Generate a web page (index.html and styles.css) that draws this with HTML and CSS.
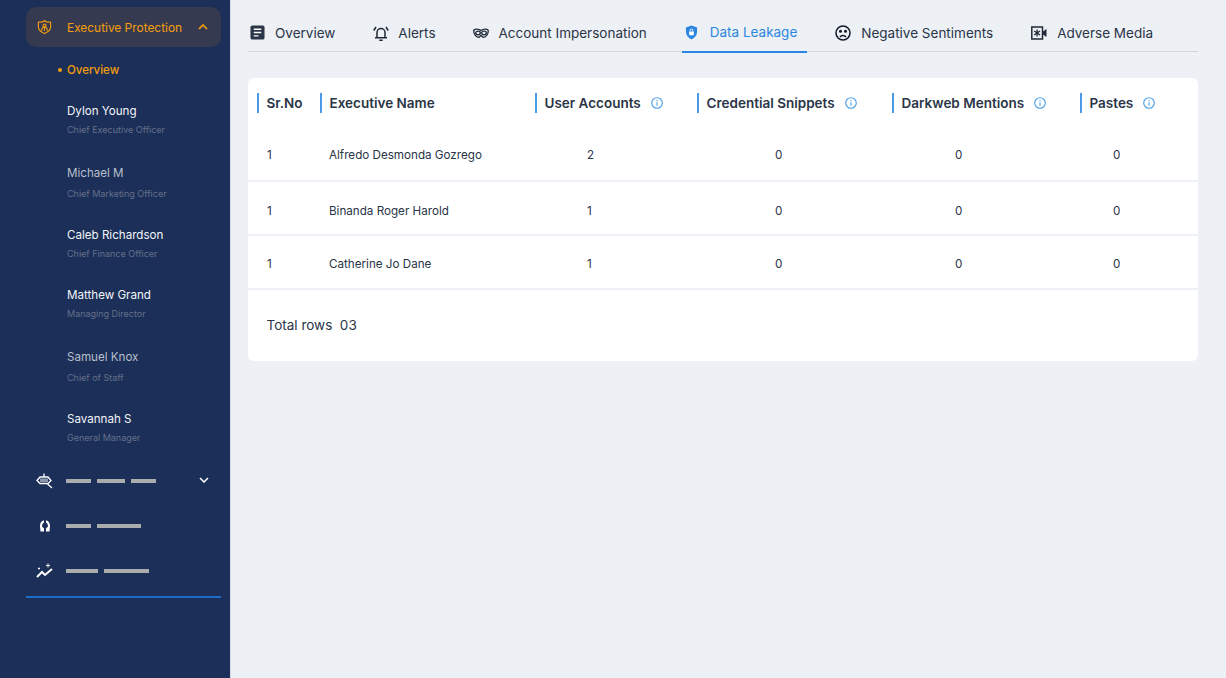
FILE: index.html
```html
<!DOCTYPE html>
<html lang="en">
<head>
<meta charset="utf-8">
<title>Data Leakage</title>
<link rel="stylesheet" href="styles.css">
</head>
<body>
<div class="app">
  <aside class="sidebar">
    <div class="menu-head">
      <svg class="ico-shield" viewBox="0 0 16 16" width="15" height="16" fill="none" stroke="currentColor" stroke-width="1.200"><path d="M8 1l2 1.500 4.500.5v5c0 3-3 5.500-6.500 7C4.500 13.500 1.500 11 1.500 8V3L6 2.500z"/><circle cx="8" cy="6.500" r="1.600"/><path d="M5 12c0-3 1-4 3-4s3 1 3 4M8 8v4"/></svg>
      <span class="menu-title">Executive Protection</span>
      <svg class="chev" viewBox="0 0 10 6" width="10" height="6" fill="none" stroke="currentColor" stroke-width="1.700"><path d="M1 5l4-4 4 4"/></svg>
    </div>
    <div class="sub-active">Overview</div>
    <ul class="people">
      <li><div class="pname">Dylon Young</div><div class="prole">Chief Executive Officer</div></li>
      <li class="dim tall"><div class="pname">Michael M</div><div class="prole">Chief Marketing Officer</div></li>
      <li class="short"><div class="pname">Caleb Richardson</div><div class="prole">Chief Finance Officer</div></li>
      <li><div class="pname">Matthew Grand</div><div class="prole">Managing Director</div></li>
      <li class="dim tall"><div class="pname">Samuel Knox</div><div class="prole">Chief of Staff</div></li>
      <li><div class="pname">Savannah S</div><div class="prole">General Manager</div></li>
    </ul>
    <div class="rows">
      <div class="rrow">
        <svg viewBox="0 0 18 16" width="18" height="16" fill="none" stroke="#fff" stroke-width="1.300"><path d="M8 .5v3M1 7.500l3-3.500h8l3 3.500-3 3H4zM11 10.500l5 4.500"/><path d="M5 5.500v3.500M7 5.500v3.500M9 5.500v3.500M11 5.500v3.500" stroke-width="1"/></svg>
        <span class="bar w25"></span><span class="bar w28"></span><span class="bar w25"></span>
        <svg class="chev-down" viewBox="0 0 10 6" width="10" height="6" fill="none" stroke="#fff" stroke-width="1.500"><path d="M1 1l4 4 4-4"/></svg>
      </div>
      <div class="rrow">
        <svg viewBox="0 0 18 16" width="18" height="16" fill="#fff"><path d="M8 2.500C5.500 2.500 4 5 4 8l.5 5.500H8v-3L6 8.500C6 6.500 6.500 5.500 8 4.500zM10 2.500c2.500 0 4 2.500 4 5.500l-.5 5.500H10v-3l2-2c0-2-.5-3-2-4z"/></svg>
        <span class="bar w25"></span><span class="bar w44"></span>
      </div>
      <div class="rrow">
        <svg viewBox="0 0 18 16" width="18" height="16" fill="none" stroke="#fff" stroke-width="2"><path d="M1 14l5-5 3 3 7-6"/><path d="M12 .5v4M10 2.500h4M3 4.500v2M2 5.500h2" stroke-width="1"/></svg>
        <span class="bar w32"></span><span class="bar w45"></span>
      </div>
    </div>
    <div class="blue-rule"></div>
  </aside>
  <main class="main">
    <nav class="tabs">
      <a class="tab t1"><svg viewBox="0 0 16 16" width="15" height="15"><rect x="0.500" y="0.500" width="15" height="15" rx="2" fill="#2a3547"/><path d="M4 4.500h8M4 8h8M4 11.500h5" stroke="#fff" stroke-width="1.400"/></svg>Overview</a>
      <a class="tab t2"><svg viewBox="0 0 16 16" width="16" height="16" fill="none" stroke="#1f2937" stroke-width="1.500"><path d="M4 12.500V7.500a4 4 0 0 1 8 0v5M2 12.800h12M6.300 15.200h3.400M.8 5.500L3 2M15.200 5.500L13 2"/></svg>Alerts</a>
      <a class="tab t3"><svg viewBox="0 0 16 10" width="16" height="10" fill="none" stroke="#1f2937" stroke-width="1.300"><path d="M8 2.500C6 .6 1 .4.700 2.800c0 3.700 2.600 6.500 4.800 6.500C7 9.300 7 7.500 8 7.500s1 1.800 2.500 1.800c2.200 0 4.800-2.800 4.800-6.500C15 .4 10 .6 8 2.500z"/><ellipse cx="5" cy="5" rx="2.300" ry="1.800"/><ellipse cx="11" cy="5" rx="2.300" ry="1.800"/></svg>Account Impersonation</a>
      <a class="tab t4 active"><svg viewBox="0 0 14 16" width="13" height="15"><path d="M7 .5l6 2v5c0 3.500-2.500 6.200-6 8-3.500-1.800-6-4.500-6-8v-5z" fill="#2a86e2"/><rect x="4.500" y="7" width="5" height="4" rx=".6" fill="#fff"/><path d="M5.500 7V5.800a1.500 1.500 0 0 1 3 0V7" fill="none" stroke="#fff"/></svg>Data Leakage</a>
      <a class="tab t5"><svg viewBox="0 0 16 16" width="16" height="16" fill="none" stroke="#111827" stroke-width="1.500"><circle cx="8" cy="8" r="7"/><path d="M5 12c1.500-2 4.500-2 6 0"/><circle cx="5.500" cy="6.300" r=".8" fill="#111827"/><circle cx="10.500" cy="6.300" r=".8" fill="#111827"/></svg>Negative Sentiments</a>
      <a class="tab t6"><svg viewBox="0 0 16 14" width="16" height="14" fill="none" stroke="#1f2937" stroke-width="1.500"><rect x=".8" y="1" width="10.700" height="12"/><path d="M6.100 3.500v7M3.200 5l5.800 4M9 5L3.200 9" stroke-width="1.300"/><path d="M12 5.500L15.500 3v8L12 8.500z" fill="#1f2937" stroke="none"/></svg>Adverse Media</a>
    </nav>
    <section class="card">
      <div class="thead">
        <div class="th">Sr.No</div>
        <div class="th">Executive Name</div>
        <div class="th">User Accounts<svg class="info" viewBox="0 0 12 12" width="12" height="12"><use href="#i"/></svg></div>
        <div class="th">Credential Snippets<svg class="info" viewBox="0 0 12 12" width="12" height="12"><use href="#i"/></svg></div>
        <div class="th">Darkweb Mentions<svg class="info" viewBox="0 0 12 12" width="12" height="12"><use href="#i"/></svg></div>
        <div class="th">Pastes<svg class="info" viewBox="0 0 12 12" width="12" height="12"><use href="#i"/></svg></div>
      </div>
      <div class="tr r1"><div>1</div><div>Alfredo Desmonda Gozrego</div><div>2</div><div>0</div><div>0</div><div>0</div></div>
      <div class="tr r2"><div>1</div><div>Binanda Roger Harold</div><div>1</div><div>0</div><div>0</div><div>0</div></div>
      <div class="tr r3"><div>1</div><div>Catherine Jo Dane</div><div>1</div><div>0</div><div>0</div><div>0</div></div>
      <div class="total">Total rows&nbsp; 03</div>
    </section>
  </main>
</div>
<svg class="defs" width="0" height="0"><defs><g id="i" fill="none" stroke="#4a9fe8" stroke-width="1.100"><circle cx="6" cy="6" r="5.300"/><path d="M6 5.200v3.600M6 3v1.200"/></g></defs></svg>
</body>
</html>
```
FILE: styles.css
```css
* { box-sizing: border-box; }
html, body { margin: 0; height: 100%; }
body { font-family: Inter, "Liberation Sans", sans-serif; background: #edf0f5; color: #2a3547; overflow: hidden; }
.app { display: flex; height: 678px; }
.defs { position: absolute; }

.sidebar { width: 231px; flex: none; background: #1b2f58; border-right: 1px solid #d5d9e2; padding: 7px 8px 0 26px; }
.menu-head { height: 40px; width: 195px; border-radius: 10px; background: #363a50; color: #f59e0b; display: flex; align-items: center; padding-left: 11px; font-size: 11.900px; }
.ico-shield { flex: none; }
.menu-title { margin-left: 15px; flex: 1; }
.chev { margin-right: 13px; }
.sub-active { margin: 16px 0 0 41px; height: 14px; line-height: 14px; font-size: 11.500px; font-weight: 500; color: #f59e0b; position: relative; }
.sub-active::before { content: ""; position: absolute; left: -9.500px; top: 5px; width: 4px; height: 4px; border-radius: 50%; background: #f59e0b; }
.people { list-style: none; margin: 27px 0 0 41px; padding: 0; }
.people li { height: 62px; }
.people li.short { height: 60px; }
.pname { font-size: 11.600px; line-height: 14px; color: #f3f5f9; }
.dim .pname { color: #b9bfcc; }
.prole { font-size: 9px; line-height: 12px; margin-top: 6px; color: #66708a; }
.tall .prole { margin-top: 8px; }
.rows { margin-top: -16px; }
.rrow { height: 45px; display: flex; align-items: center; gap: 6px; padding-left: 10px; position: relative; }
.rrow > svg:first-child { margin-right: 6px; flex: none; }
.bar { height: 4px; background: #aaacae; display: block; }
.w25 { width: 25px; }
.w28 { width: 28px; }
.w32 { width: 32px; }
.w44 { width: 44px; }
.w45 { width: 45px; }
.chev-down { position: absolute; right: 13px; top: 19px; }
.blue-rule { height: 2px; background: #1a6cc8; margin-top: 3px; width: 195px; }

.main { flex: 1; padding: 0 28px 0 17px; min-width: 0; }
.tabs { height: 52px; border-bottom: 1px solid #d3d7dd; display: flex; align-items: flex-start; font-size: 13.500px; }
.tab { display: flex; align-items: center; gap: 10px; height: 52px; padding-top: 13px; color: #2a3547; position: relative; }
.tab svg { flex: none; }
.t1 { margin-left: 2px; }
.t2 { margin-left: 38px; gap: 9px; }
.t3 { margin-left: 37px; }
.t4 { margin-left: 35px; padding: 12px 10px 0 3px; gap: 12px; color: #2a86e2; }
.t4::after { content: ""; position: absolute; left: 0; right: 0; bottom: -1px; height: 2px; background: #2a86e2; }
.t5 { margin-left: 28px; }
.t6 { margin-left: 38px; }

.card { margin-top: 26px; height: 283px; background: #fff; border-radius: 6px; font-size: 11.650px; }
.thead, .tr { display: grid; grid-template-columns: 63px 215px 162px 195px 188px 1fr; padding-left: 9px; }
.thead { height: 50px; padding-top: 15px; }
.th { height: 20px; border-left: 2px solid #4a9ae6; padding-left: 7.500px; font-size: 13.500px; font-weight: 600; line-height: 20px; color: #2a3547; display: flex; align-items: center; }
.info { margin-left: 10px; flex: none; }
.tr { border-bottom: 2px solid #edf0f5; align-items: center; }
.r1 { height: 54px; padding-top: 1px; }
.r2 { height: 54px; padding-top: 5px; }
.r3 { height: 54px; padding-top: 4px; }
.tr > div:nth-child(1) { padding-left: 10px; }
.tr > div:nth-child(2) { padding-left: 9px; }
.tr > div:nth-child(3) { padding-left: 52px; }
.tr > div:nth-child(4) { padding-left: 78px; }
.tr > div:nth-child(5) { padding-left: 63px; }
.tr > div:nth-child(6) { padding-left: 33px; }
.total { padding: 27px 0 0 18.500px; font-size: 13.500px; line-height: 16px; }
```
